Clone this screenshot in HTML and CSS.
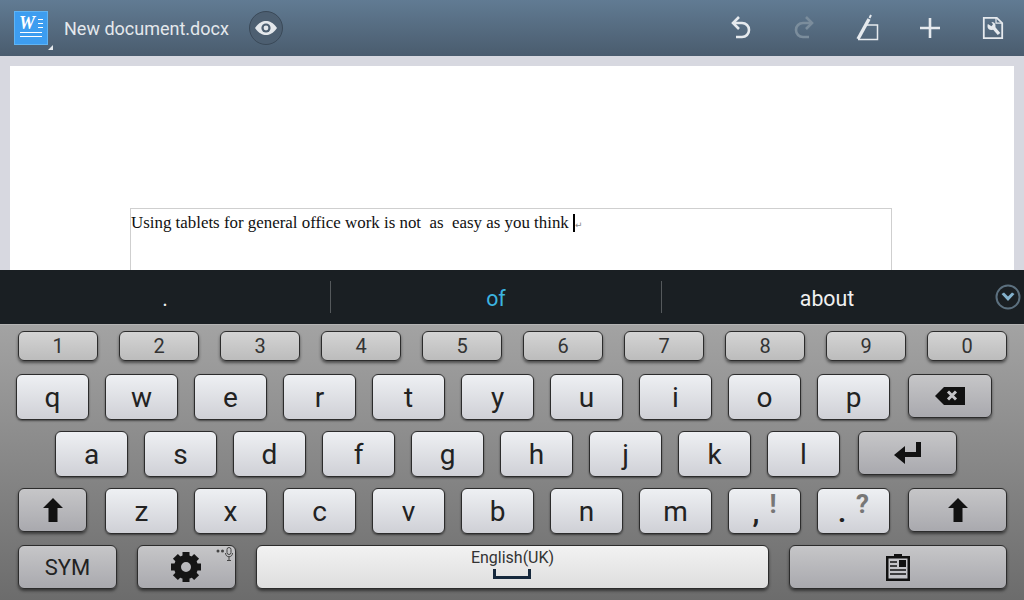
FILE: index.html
```html
<!DOCTYPE html>
<html lang="en">
<head>
  <meta charset="UTF-8">
  <title>New document.docx</title>
  <link rel="stylesheet" href="styles.css">
</head>
<body>
  <!-- Top Bar -->
  <div class="topbar">
    <div class="app-icon">
      <span class="app-letter">W</span>
      <span class="app-dashes"><i></i><i></i><i></i></span>
      <span class="app-lines"><i></i><i></i></span>
      <span class="app-corner"></span>
    </div>
    <div class="doc-title">New document.docx</div>
    <div class="eye-button">
      <svg width="24" height="16" viewBox="0 0 24 16">
        <path d="M1 8C5 2.500 8.500 1 12 1s7 1.500 11 7c-4 5.500-7.500 7-11 7S5 13.500 1 8z" fill="#e4e8ec"/>
        <circle cx="12" cy="8" r="4.600" fill="#4d5f71"/>
        <circle cx="12" cy="8" r="2.400" fill="#e4e8ec"/>
      </svg>
    </div>
    <div class="tools">
      <div class="tool">
        <svg width="24" height="26" viewBox="0 0 24 26" fill="none" stroke="#e6eaee" stroke-width="2.600">
          <path d="M10 2L4 8l6 6"/>
          <path d="M4 8h9c4 0 7 3 7 7s-3 7-7 7H7"/>
        </svg>
      </div>
      <div class="tool">
        <svg width="24" height="26" viewBox="0 0 24 26" fill="none" stroke="#7b8d9c" stroke-width="2.600">
          <path d="M14 2l6 6-6 6"/>
          <path d="M20 8h-9c-4 0-7 3-7 7s3 7 7 7h6"/>
        </svg>
      </div>
      <div class="tool">
        <svg width="24" height="28" viewBox="0 0 24 28" fill="none" stroke="#e6eaee">
          <path d="M12 11h10.500v14.500H3" stroke-width="1.500"/>
          <path d="M3 25L14 5" stroke-width="3.400"/>
          <path d="M14.500 4l1.500-3" stroke-width="2"/>
        </svg>
      </div>
      <div class="tool">
        <svg width="24" height="24" viewBox="0 0 24 24" fill="none" stroke="#e6eaee" stroke-width="2.600">
          <path d="M12 2v20M2 12h20"/>
        </svg>
      </div>
      <div class="tool">
        <svg width="24" height="26" viewBox="0 0 24 26">
          <path d="M2.800 2.800h13l5.400 5.400v15H2.800z" fill="none" stroke="#e6eaee" stroke-width="1.800"/>
          <path d="M15 2.800v5.400h6" fill="none" stroke="#e6eaee" stroke-width="1.200"/>
          <path d="M12 12l6 7" stroke="#e6eaee" stroke-width="3.400" fill="none"/>
          <circle cx="10.500" cy="11" r="4" fill="#e6eaee"/>
          <path d="M6 8.500l4.500 2.700 1.500-2-2.500-3.500z" fill="#556a7e"/>
        </svg>
      </div>
    </div>
  </div>

  <!-- Document -->
  <div class="doc-area">
    <div class="page">
      <div class="table-box"><span>Using tablets for general office work is not  as  easy as you think </span><span class="caret"></span><span class="para-mark">↵</span></div>
    </div>
  </div>

  <!-- Suggestions -->
  <div class="suggest-bar">
    <div class="suggest">.</div>
    <div class="suggest-line"></div>
    <div class="suggest active">of</div>
    <div class="suggest-line"></div>
    <div class="suggest">about</div>
    <div class="suggest-toggle">
      <svg width="26" height="26" viewBox="0 0 26 26">
        <circle cx="13" cy="13" r="11.500" fill="none" stroke="#5c707f" stroke-width="2"/>
        <path d="M6.500 10l2.500-1.500 4 4 4-4 2.500 1.500-6.500 7z" fill="#84b1cc"/>
      </svg>
    </div>
  </div>

  <!-- Keyboard -->
  <div class="keyboard">
    <div class="row row-num">
      <div class="key num">1</div>
      <div class="key num">2</div>
      <div class="key num">3</div>
      <div class="key num">4</div>
      <div class="key num">5</div>
      <div class="key num">6</div>
      <div class="key num">7</div>
      <div class="key num">8</div>
      <div class="key num">9</div>
      <div class="key num">0</div>
    </div>
    <div class="row row-top">
      <div class="key">q</div>
      <div class="key">w</div>
      <div class="key">e</div>
      <div class="key">r</div>
      <div class="key">t</div>
      <div class="key">y</div>
      <div class="key">u</div>
      <div class="key">i</div>
      <div class="key">o</div>
      <div class="key">p</div>
      <div class="key dark backspace">
        <svg width="30" height="18" viewBox="0 0 30 18">
          <path d="M9 0h21v18H9L0 9z" fill="#111"/>
          <path d="M13 4.500l8 8M21 4.500l-8 8" stroke="#c4c4c8" stroke-width="3"/>
        </svg>
      </div>
    </div>
    <div class="row row-mid">
      <div class="key">a</div>
      <div class="key">s</div>
      <div class="key">d</div>
      <div class="key">f</div>
      <div class="key">g</div>
      <div class="key">h</div>
      <div class="key">j</div>
      <div class="key">k</div>
      <div class="key">l</div>
      <div class="key dark enter">
        <svg width="28" height="23" viewBox="0 0 28 23">
          <path d="M22 0h5v15H11v7L0 13l11-9v6h11z" fill="#111"/>
        </svg>
      </div>
    </div>
    <div class="row row-low">
      <div class="key dark shift-left">
        <svg width="20" height="24" viewBox="0 0 20 24">
          <path d="M10 0l10 10h-5.500v14h-9V10H0z" fill="#111"/>
        </svg>
      </div>
      <div class="key">z</div>
      <div class="key">x</div>
      <div class="key">c</div>
      <div class="key">v</div>
      <div class="key">b</div>
      <div class="key">n</div>
      <div class="key">m</div>
      <div class="key punct"><span class="main">,</span><span class="alt">!</span></div>
      <div class="key punct"><span class="main">.</span><span class="alt">?</span></div>
      <div class="key dark shift-right">
        <svg width="20" height="24" viewBox="0 0 20 24">
          <path d="M10 0l10 10h-5.500v14h-9V10H0z" fill="#111"/>
        </svg>
      </div>
    </div>
    <div class="row row-bottom">
      <div class="key dark sym">SYM</div>
      <div class="key dark settings">
        <svg width="30" height="30" viewBox="-15 -15 30 30">
          <circle r="8.500" fill="none" stroke="#151515" stroke-width="7"/>
          <g fill="#151515">
            <rect x="-3.500" y="-15" width="7" height="6"/>
            <rect x="-3.500" y="-15" width="7" height="6" transform="rotate(45)"/>
            <rect x="-3.500" y="-15" width="7" height="6" transform="rotate(90)"/>
            <rect x="-3.500" y="-15" width="7" height="6" transform="rotate(135)"/>
            <rect x="-3.500" y="-15" width="7" height="6" transform="rotate(180)"/>
            <rect x="-3.500" y="-15" width="7" height="6" transform="rotate(225)"/>
            <rect x="-3.500" y="-15" width="7" height="6" transform="rotate(270)"/>
            <rect x="-3.500" y="-15" width="7" height="6" transform="rotate(315)"/>
          </g>
        </svg>
        <svg class="mic" width="18" height="14" viewBox="0 0 18 14">
          <circle cx="2" cy="4" r="1.500" fill="#444"/>
          <circle cx="6.500" cy="4" r="1.500" fill="#444"/>
          <rect x="11" y="0.500" width="4" height="7" rx="2" fill="none" stroke="#444"/>
          <path d="M9.500 6c0 5 7 5 7 0M13 10v3M11 13.500h4" fill="none" stroke="#444"/>
        </svg>
      </div>
      <div class="key space">
        <span class="space-label">English(UK)</span>
        <span class="space-bracket"></span>
      </div>
      <div class="key dark clip">
        <svg width="24" height="27" viewBox="0 0 24 27">
          <path d="M8 0h8v2h8v25H0V2h8z" fill="#111"/>
          <rect x="2.500" y="4.500" width="19" height="20" fill="#c4c4c8"/>
          <path d="M4 8h7M4 12h7M4 16h16M4 20h16" stroke="#111" stroke-width="1.600"/>
          <rect x="13" y="6" width="7" height="7" fill="#111"/>
        </svg>
      </div>
    </div>
  </div>
</body>
</html>
```

FILE: styles.css
```css
/* Global Styles */
* {
  margin: 0;
  padding: 0;
  box-sizing: border-box;
}

body {
  width: 1024px;
  height: 600px;
  overflow: hidden;
  font-family: 'Roboto', sans-serif;
  background-color: #d7d8e0;
}

/* Top Bar */
.topbar {
  display: flex;
  align-items: center;
  height: 56px;
  padding-left: 14px;
  background: linear-gradient(#617b93, #4a5c6e);
}

.app-icon {
  position: relative;
  width: 34px;
  height: 34px;
  background-color: #3d9df0;
  border: 1px solid #5fb4f5;
}

.app-letter {
  position: absolute;
  left: 4px;
  top: 0;
  font-family: 'Liberation Serif', serif;
  font-size: 18px;
  line-height: 22px;
  font-weight: bold;
  font-style: italic;
  color: #ffffff;
}

.app-dashes {
  position: absolute;
  right: 4px;
  top: 7px;
  display: flex;
  flex-direction: column;
  align-items: flex-end;
  gap: 3px;
}

.app-dashes i {
  width: 5px;
  height: 1px;
  background-color: #ffffff;
}

.app-lines {
  position: absolute;
  left: 5px;
  right: 5px;
  top: 20px;
  display: flex;
  flex-direction: column;
  gap: 3px;
}

.app-lines i {
  height: 1px;
  background-color: #ffffff;
}

.app-corner {
  position: absolute;
  right: -6px;
  bottom: -6px;
  border-left: 5px solid transparent;
  border-bottom: 5px solid #e4e8ec;
}

.doc-title {
  margin-left: 16px;
  font-size: 18px;
  color: #e4e8ec;
}

.eye-button {
  display: flex;
  justify-content: center;
  align-items: center;
  width: 34px;
  height: 34px;
  margin-left: 20px;
  background-color: #4d5f71;
  border: 1px solid #3a4958;
  border-radius: 50%;
}

.tools {
  display: flex;
  margin-left: auto;
}

.tool {
  display: flex;
  justify-content: center;
  align-items: center;
  width: 63px;
  height: 56px;
}

/* Document */
.doc-area {
  height: 214px;
  padding: 10px 10px 0;
  overflow: hidden;
}

.page {
  height: 204px;
  padding: 142px 0 0 120px;
  background-color: #ffffff;
}

.table-box {
  width: 762px;
  height: 80px;
  padding-top: 4px;
  border: 1px solid #cfcfcf;
  font-family: 'Liberation Serif', serif;
  font-size: 16.900px;
  line-height: 20px;
  color: #111;
  white-space: pre;
}

.caret {
  display: inline-block;
  width: 2px;
  height: 18px;
  vertical-align: -4px;
  background-color: #000;
}

.para-mark {
  font-family: 'DejaVu Sans', sans-serif;
  font-size: 9px;
  color: #888;
}

/* Suggestions */
.suggest-bar {
  position: relative;
  display: flex;
  align-items: center;
  height: 54px;
  padding-right: 32px;
  background-color: #1a1f23;
}

.suggest {
  flex: 1;
  padding-top: 3px;
  text-align: center;
  font-size: 21.300px;
  color: #f0f0f0;
}

.suggest.active {
  color: #3cb4e0;
}

.suggest-line {
  width: 1px;
  height: 32px;
  background-color: #55595c;
}

.suggest-toggle {
  position: absolute;
  right: 3px;
  top: 14px;
  display: flex;
}

/* Keyboard */
.keyboard {
  height: 276px;
  border-top: 1px solid #b4b4b4;
  background: linear-gradient(#a3a3a3, #6c6c6c);
}

.row {
  display: flex;
  align-items: flex-start;
}

.row-num {
  gap: 21px;
  padding: 6px 0 0 18px;
}

.row-top {
  gap: 16px;
  margin-top: 13px;
  padding-left: 16px;
}

.row-mid {
  gap: 16px;
  margin-top: 11px;
  padding-left: 55px;
}

.row-low {
  gap: 16px;
  margin-top: 11px;
  padding-left: 18px;
}

.row-bottom {
  gap: 20px;
  margin-top: 11px;
  padding-left: 18px;
}

/* Keys */
.key {
  display: flex;
  justify-content: center;
  align-items: center;
  flex: none;
  width: 73px;
  height: 46px;
  font-size: 28px;
  color: #222;
  background: linear-gradient(#eef0f3, #cfd0d6);
  border: 1px solid #2c2c2c;
  border-radius: 6px;
  box-shadow: 0 1px 2px rgba(0, 0, 0, 0.5);
}

.key.num {
  width: 80px;
  height: 30px;
  font-size: 20px;
  color: #333;
  background: linear-gradient(#d4d4d4, #bcbcbc);
  box-shadow: 0 2px 3px rgba(0, 0, 0, 0.5);
}

.key.dark {
  height: 44px;
  background: linear-gradient(#c6c6c8, #a9a9ae);
  box-shadow: 0 2px 3px rgba(0, 0, 0, 0.5);
}

.backspace {
  width: 84px;
  margin-left: 2px;
}

.enter {
  width: 99px;
  margin-left: 2px;
}

.shift-left {
  width: 69px;
}

.row-low .key:nth-child(2) {
  margin-left: 2px;
}

.shift-right {
  width: 99px;
  margin-left: 2px;
}

.sym {
  width: 99px;
  font-size: 22px;
  color: #222;
}

.settings {
  position: relative;
  width: 99px;
  padding-right: 2px;
}

.mic {
  position: absolute;
  right: 1px;
  top: 1px;
}

.space {
  flex-direction: column;
  justify-content: flex-start;
  width: 513px;
  height: 44px;
  padding-top: 2px;
  background: linear-gradient(#f2f2f2, #dedede);
  box-shadow: 0 2px 3px rgba(0, 0, 0, 0.5);
}

.space-label {
  font-size: 16px;
  line-height: 19px;
  color: #333;
}

.space-bracket {
  width: 38px;
  height: 10px;
  margin: 2px 1px 0 0;
  border: 3px solid #16283c;
  border-top: none;
}

.clip {
  width: 218px;
}

.punct {
  align-items: flex-start;
  gap: 10px;
  color: #777;
}

.punct .main {
  margin-top: 7px;
  font-weight: bold;
  color: #222;
}

.punct .alt {
  font-size: 26px;
  font-weight: bold;
}
```
